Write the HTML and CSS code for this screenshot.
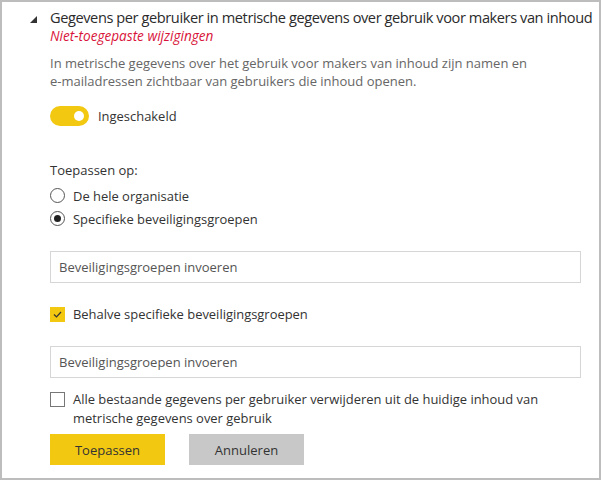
FILE: index.html
```html
<!DOCTYPE html>
<html lang="nl">
<head>
<meta charset="utf-8">
<link rel="stylesheet" href="styles.css">
</head>
<body>
<div class="panel">
  <div class="header">
    <svg class="caret" width="8" height="7" viewBox="0 0 8 7"><polygon points="7,0 7,7 0,7" fill="#333"/></svg>
    <div class="header-text">
      <div class="title">Gegevens per gebruiker in metrische gegevens over gebruik voor makers van inhoud</div>
      <div class="pending">Niet-toegepaste wijzigingen</div>
    </div>
  </div>
  <div class="content">
    <p class="desc">In metrische gegevens over het gebruik voor makers van inhoud zijn namen en e&#8209;mailadressen zichtbaar van gebruikers die inhoud openen.</p>
    <div class="toggle-row">
      <span class="toggle"><span class="knob"></span></span>
      <span class="label">Ingeschakeld</span>
    </div>
    <div class="apply-label">Toepassen op:</div>
    <div class="radio-row"><span class="radio"></span><span class="label">De hele organisatie</span></div>
    <div class="radio-row"><span class="radio checked"></span><span class="label">Specifieke beveiligingsgroepen</span></div>
    <div class="input first">Beveiligingsgroepen invoeren</div>
    <div class="check-row">
      <span class="checkbox checked"><svg width="15" height="15" viewBox="0 0 15 15"><polyline points="4,7.5 6.5,10 11,5" fill="none" stroke="#333" stroke-width="1.2"/></svg></span>
      <span class="label">Behalve specifieke beveiligingsgroepen</span>
    </div>
    <div class="input second">Beveiligingsgroepen invoeren</div>
    <div class="check-row two">
      <span class="checkbox"></span>
      <span class="label">Alle bestaande gegevens per gebruiker verwijderen uit de huidige inhoud van metrische gegevens over gebruik</span>
    </div>
    <div class="buttons">
      <button class="btn primary">Toepassen</button>
      <button class="btn secondary">Annuleren</button>
    </div>
  </div>
</div>
</body>
</html>
```
FILE: styles.css
```css
* { box-sizing: border-box; }
html, body { margin: 0; padding: 0; background: #fff; }
body { font-family: "Open Sans", "Noto Sans", sans-serif; color: #333; }

.panel {
  width: 601px;
  height: 480px;
  border: 2px solid #bdbdbd;
  position: relative;
}

.header {
  display: flex;
  align-items: flex-start;
  padding: 5px 0 0 28px;
}
.caret { margin-top: 9px; margin-right: 12px; flex: none; }
.title {
  font-size: 14.6px;
  line-height: 20px;
  color: #2b2b2b;
  letter-spacing: -0.42px;
  white-space: nowrap;
}
.pending {
  font-size: 13.6px;
  font-style: italic;
  line-height: 18px;
  color: #d9143a;
}

.content { padding-left: 48px; padding-right: 18px; }

.desc {
  margin: 9px 0 0;
  font-size: 13px;
  line-height: 18px;
  color: #666;
  width: 478px;
}

.label { font-size: 12.95px; color: #333; }

.toggle-row { display: flex; align-items: center; margin-top: 16px; height: 20px; }
.toggle {
  width: 39px; height: 20px; border-radius: 10px;
  background: #f2c811; position: relative; margin-right: 9px;
}
.knob {
  position: absolute; right: 5px; top: 5px;
  width: 10px; height: 10px; border-radius: 50%; background: #fff;
}

.apply-label { margin-top: 35px; font-size: 13px; line-height: 18px; color: #333; }

.radio-row { display: flex; align-items: center; height: 23px; margin-top: 5px; }
.radio-row + .radio-row { margin-top: 0; }
.radio {
  width: 15px; height: 15px; border-radius: 50%;
  border: 1px solid #555; margin-right: 8px; position: relative; flex: none;
}
.radio.checked::after {
  content: ""; position: absolute; left: 3px; top: 3px;
  width: 7px; height: 7px; border-radius: 50%; background: #222;
}

.input {
  height: 32px;
  border: 1px solid #d6d6d6;
  font-size: 13px;
  color: #555;
  padding: 0 8px;
  display: flex; align-items: center;
  width: 531px;
}
.input.first { margin-top: 21px; }
.input.second { margin-top: 17px; }

.check-row { display: flex; align-items: center; margin-top: 16px; height: 30px; }
.checkbox {
  width: 15px; height: 15px; border: 1px solid #777; margin-right: 8px; flex: none;
  display: flex;
}
.checkbox.checked { background: #f2c811; border-color: #f2c811; }
.checkbox.checked svg { margin: -1px; }

.check-row.two { align-items: flex-start; height: auto; margin-top: 12px; }
.check-row.two .checkbox { margin-top: 2px; }
.check-row.two .label { line-height: 19px; width: 480px; }

.buttons { display: flex; gap: 24px; margin-top: 6px; }
.btn {
  width: 115px; height: 31px; border: none;
  font-family: inherit; font-size: 13px; color: #333;
}
.btn.primary { background: #f2c811; }
.btn.secondary { background: #c8c8c8; }
```
